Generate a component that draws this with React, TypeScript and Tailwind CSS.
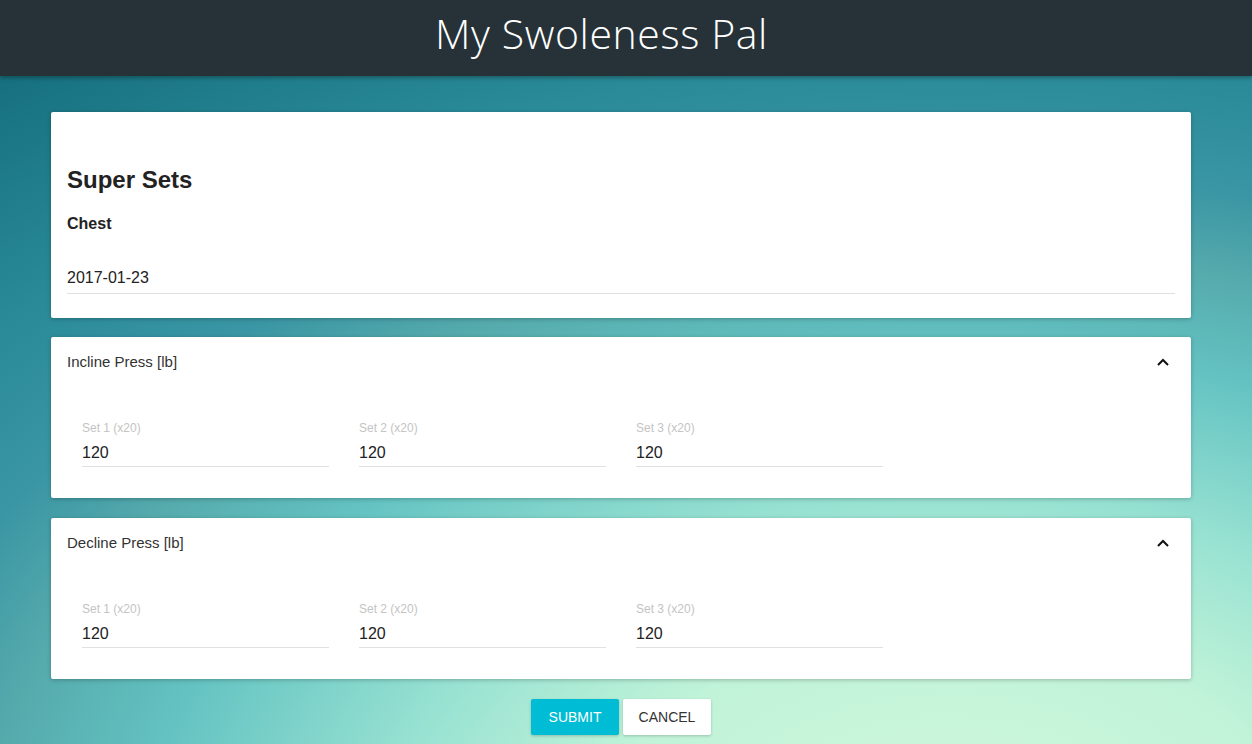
import React from "react";

const font = { fontFamily: '"Liberation Sans", Arial, sans-serif' };

function Chevron() {
  return (
    <svg width="14" height="10" viewBox="0 0 14 10" className="block">
      <path d="M2 8 L7 3 L12 8" fill="none" stroke="#111" strokeWidth="2" />
    </svg>
  );
}

function Field({ label, value }: { label: string; value: string }) {
  return (
    <div className="w-[247px]">
      <div className="text-[12px] leading-[16px] text-[#c4c4c4]">{label}</div>
      <div className="mt-[5px] h-[24px] leading-[24px] text-[16px] text-[#222] border-b border-[#e0e0e0] box-content pb-[1px]">
        {value}
      </div>
    </div>
  );
}

function Exercise({ title, mt }: { title: string; mt: string }) {
  return (
    <div className={`w-[1140px] bg-white rounded-[2px] shadow-[0_1px_4px_rgba(0,0,0,0.25)] ${mt}`}>
      <div className="h-[50px] px-4 flex items-center justify-between">
        <span className="text-[15px] text-[#333]">{title}</span>
        <span className="mr-[5px]"><Chevron /></span>
      </div>
      <div className="pt-[33px] pb-[31px] pl-[31px] flex gap-[30px]">
        <Field label="Set 1 (x20)" value="120" />
        <Field label="Set 2 (x20)" value="120" />
        <Field label="Set 3 (x20)" value="120" />
      </div>
    </div>
  );
}

export default function App() {
  return (
    <div
      style={font}
      className="min-h-screen w-full overflow-hidden bg-[#16707f] bg-[radial-gradient(ellipse_1600px_1000px_at_950px_850px,#d2f9de_0%,#c0f3d8_22%,#98e2d2_35%,#64c3c2_50%,#55aaac_60%,#3a96a4_68%,#2a8a98_79%,#16707f_97%)]"
    >
      <header className="h-[76px] bg-[#263238] flex items-center justify-center shadow-[0_2px_4px_rgba(0,0,0,0.3)]">
        <h1
          className="text-white text-[41px] font-light mr-[49px] mb-[8px] tracking-[0.6px]"
          style={{ fontFamily: '"Open Sans", "Lato", sans-serif' }}
        >
          My Swoleness Pal
        </h1>
      </header>
      <main className="pl-[51px] pt-[36px] pb-[9px]">
        <div className="w-[1140px] bg-white rounded-[2px] shadow-[0_1px_4px_rgba(0,0,0,0.25)] px-4 pt-[52px] pb-[24px]">
          <h2 className="text-[24px] leading-[32px] font-bold text-[#222]">Super Sets</h2>
          <div className="mt-[16px] text-[16px] leading-[24px] font-bold text-[#222]">Chest</div>
          <div className="mt-[30px] h-[24px] leading-[24px] text-[16px] text-[#222] border-b border-[#e0e0e0] box-content pb-[3px]">
            2017-01-23
          </div>
        </div>
        <Exercise title="Incline Press [lb]" mt="mt-[19px]" />
        <Exercise title="Decline Press [lb]" mt="mt-[20px]" />
        <div className="w-[1140px] mt-[20px] flex justify-center">
          <div className="ml-[0px] flex gap-[4px]">
            <button className="w-[88px] h-[36px] bg-[#00bcd4] text-white text-[14px] uppercase rounded-[2px] shadow-[0_1px_3px_rgba(0,0,0,0.2)]">
              Submit
            </button>
            <button className="w-[88px] h-[36px] bg-white text-[#333] text-[14px] uppercase rounded-[2px] shadow-[0_1px_3px_rgba(0,0,0,0.2)]">
              Cancel
            </button>
          </div>
        </div>
      </main>
    </div>
  );
}
